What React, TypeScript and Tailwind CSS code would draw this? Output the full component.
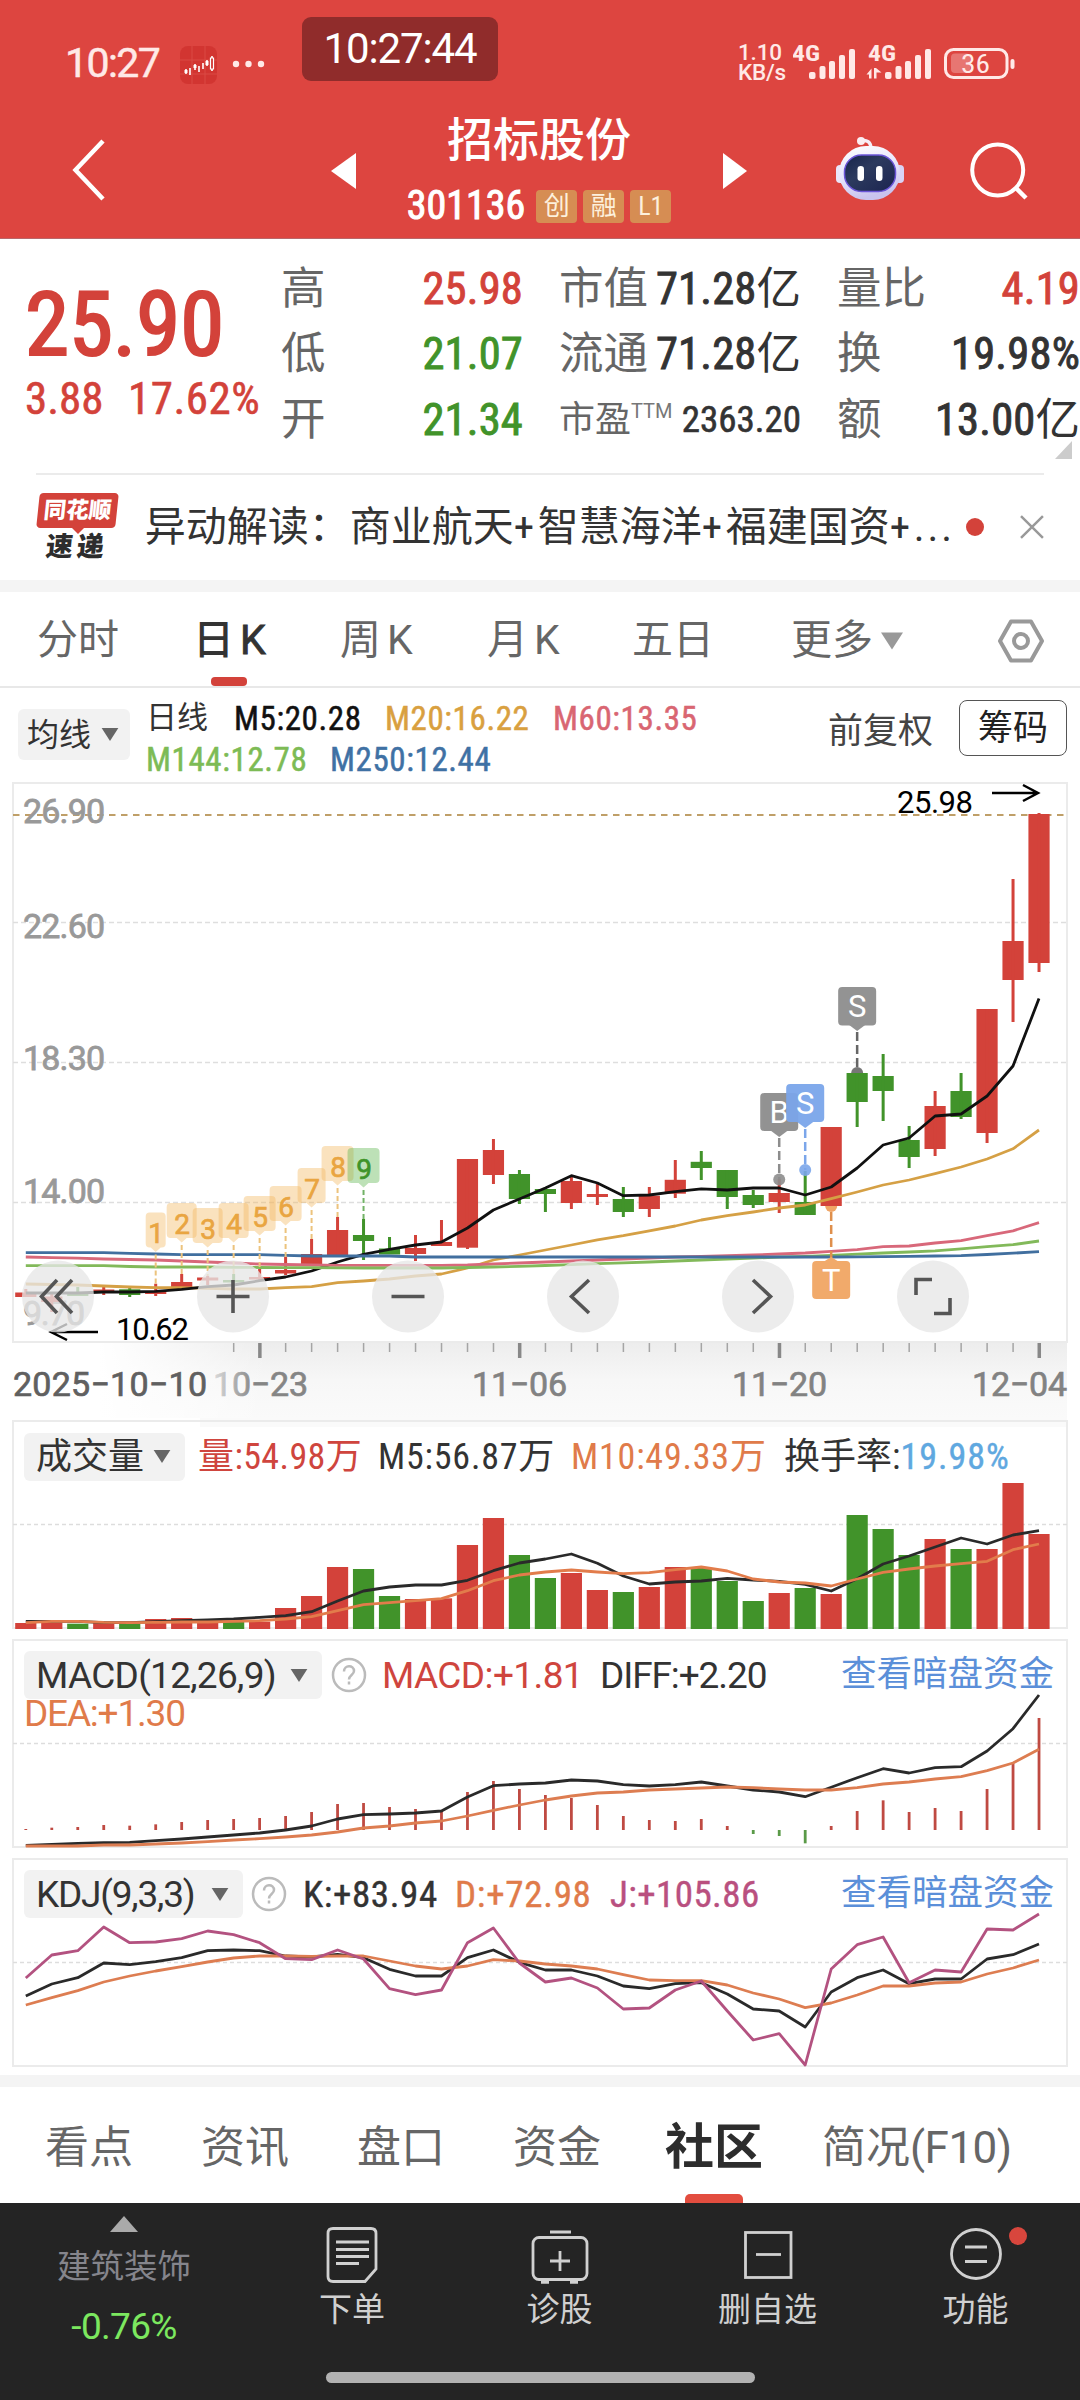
import type { ReactNode } from "react"

type Candle = [up: number, top: number, bottom: number, high: number, low: number]

// x position of the n-th trading day
const dayX = (i: number) => 25.8 + 25.98 * i

// up, body top, body bottom, high, low
const candles: Candle[] = [
  [1, 1292.5, 1297, 1289, 1297],
  [1, 1296.5, 1302, 1293, 1312],
  [0, 1293, 1296, 1287, 1296],
  [1, 1289.5, 1292.5, 1287, 1295],
  [0, 1289.3, 1295, 1288, 1297],
  [1, 1291.5, 1294, 1283.7, 1296],
  [1, 1282, 1287, 1274, 1287],
  [1, 1277.5, 1280.5, 1276, 1285],
  [0, 1280, 1282.5, 1274, 1283],
  [1, 1277, 1279.5, 1269, 1280],
  [1, 1270, 1273.5, 1257, 1275],
  [1, 1254, 1265.5, 1239, 1266],
  [1, 1230, 1255, 1217, 1257],
  [0, 1235, 1241, 1219, 1260],
  [0, 1248.5, 1254.5, 1237, 1254],
  [1, 1248, 1254, 1235, 1261],
  [1, 1242, 1246, 1220, 1246],
  [1, 1159, 1247.7, 1159, 1249],
  [1, 1150, 1175, 1139, 1184],
  [0, 1174, 1199, 1170, 1204],
  [0, 1189, 1194, 1187, 1212],
  [1, 1181, 1203, 1177, 1209],
  [1, 1194, 1197, 1184, 1205],
  [0, 1199, 1212, 1187, 1217],
  [1, 1195.7, 1209, 1187, 1217],
  [1, 1179.8, 1193.7, 1160, 1198],
  [0, 1161.8, 1168, 1151, 1180],
  [0, 1170, 1197, 1170, 1209],
  [0, 1195, 1205, 1190, 1208],
  [1, 1193, 1202, 1179, 1213],
  [0, 1202, 1215, 1171, 1215],
  [1, 1127, 1206, 1127, 1206],
  [0, 1073, 1102, 1073, 1127],
  [0, 1076, 1091, 1054, 1121],
  [0, 1140, 1157, 1126, 1168],
  [1, 1106, 1149, 1091, 1156],
  [0, 1091, 1117, 1073, 1119],
  [1, 1009, 1133, 1009, 1143],
  [1, 941, 980, 879, 1022],
  [1, 814, 963, 813, 972],
]

const m5 = [1293, 1293, 1293, 1292, 1292, 1291.3, 1289.3, 1286.7, 1285, 1280.7, 1277, 1271, 1262, 1254.3, 1249.3, 1245, 1242, 1228, 1210, 1199, 1188, 1175.7, 1183, 1195.7, 1195, 1191.6, 1188.8, 1190, 1188, 1188, 1195, 1187, 1168, 1145, 1138, 1116, 1114, 1096, 1066, 998.6]
const m20 = [1284, 1284.5, 1285, 1286, 1287, 1287.7, 1287.7, 1288.4, 1289, 1289, 1287.7, 1286.7, 1282.7, 1281, 1279, 1276, 1274, 1268, 1260, 1255, 1250, 1245, 1239.8, 1235.7, 1230.8, 1226, 1220, 1215.7, 1212, 1208, 1205, 1198.6, 1192, 1185, 1180, 1173.7, 1167, 1159, 1148.8, 1130]
const m60 = [1257, 1257.6, 1258.2, 1259, 1259.5, 1260, 1261, 1262, 1263, 1264, 1264.5, 1265, 1265.3, 1265.3, 1265.3, 1265.3, 1265.3, 1265, 1264, 1263, 1262, 1261, 1260, 1259, 1258, 1257, 1256.3, 1255.7, 1255, 1254, 1253, 1251.3, 1249.6, 1246.7, 1246, 1243, 1240.6, 1235.7, 1230.8, 1222.7]
const m144 = [1265.7, 1265.7, 1265.7, 1265.7, 1266.5, 1267, 1267, 1267, 1267.3, 1267.5, 1267.6, 1267.7, 1267.8, 1268, 1268, 1268, 1268, 1267.5, 1267, 1266.3, 1265.5, 1264.6, 1263.7, 1262.8, 1262, 1261, 1260, 1259, 1258, 1257.2, 1256.5, 1255.3, 1254.2, 1253, 1252, 1250.8, 1248.8, 1246.7, 1244.7, 1241]
const m250 = [1252.7, 1252.7, 1252.7, 1252.7, 1253.3, 1254, 1254.7, 1254.7, 1254.7, 1254.7, 1255.4, 1256, 1256, 1256, 1256, 1257, 1257, 1257, 1257, 1257, 1257, 1257, 1257, 1257, 1257, 1257, 1257, 1257, 1257, 1257, 1257, 1257, 1256.8, 1256.6, 1256.3, 1256, 1255.7, 1254.5, 1253.2, 1251.6]

// the indicator panels keep their values in thirds of a pixel from the panel origin
const volume = [669, 668, 671, 669, 671, 657, 654, 663, 664, 665, 624, 588, 501, 507, 588, 597, 595, 435, 354, 465, 534, 519, 570, 576, 561, 501, 504, 543, 603, 579, 564, 582, 345, 387, 465, 417, 447, 447, 249, 402]
const volM5 = [664, 664, 664, 668, 668, 665, 662, 660, 657, 652, 647, 635, 603, 573, 561, 555, 555, 541, 512, 489, 477, 462, 490, 528, 552, 546, 543, 535, 540, 544, 553, 573, 536, 492, 468, 441, 414, 432, 405, 392]
const volM10 = [668, 664, 664, 667, 668, 667, 666, 666, 664, 662, 657, 650, 632, 614, 608, 602, 596, 572, 542, 525, 516, 510, 516, 521, 518, 509, 501, 513, 537, 546, 549, 558, 537, 517, 507, 498, 491, 484, 449, 432]

const macd = [597, 593, 591, 585, 587, 583, 576, 570, 567, 564, 558, 546, 522, 519, 531, 537, 545, 486, 453, 477, 495, 504, 525, 558, 570, 573, 567, 588, 612, 618, 640, 588, 543, 511, 546, 534, 543, 477, 400, 264]
const diff = [646, 643, 640, 638, 637, 632, 627, 621, 615, 609, 600, 588, 567, 554, 552, 549, 543, 501, 467, 462, 459, 450, 453, 464, 468, 464, 456, 468, 480, 486, 500, 472, 443, 416, 429, 413, 410, 363, 296, 195]
const dea = [648, 648, 648, 645, 645, 642, 639, 635, 630, 626, 621, 615, 606, 594, 588, 579, 573, 558, 541, 525, 510, 498, 489, 486, 480, 477, 474, 471, 473, 477, 480, 480, 473, 462, 456, 447, 440, 422, 399, 358]

const kLine = [438, 402, 383, 339, 344, 335, 323, 302, 300, 302, 318, 321, 313, 323, 358, 378, 378, 323, 300, 337, 360, 360, 378, 408, 416, 401, 398, 432, 477, 483, 531, 426, 383, 360, 401, 387, 387, 327, 314, 282]
const dLine = [465, 443, 422, 396, 378, 363, 350, 336, 324, 318, 318, 319, 318, 318, 333, 348, 357, 348, 329, 333, 342, 348, 357, 374, 390, 392, 392, 405, 429, 447, 473, 459, 435, 408, 408, 399, 396, 372, 354, 330]
const jLine = [384, 315, 302, 231, 278, 276, 266, 243, 254, 278, 326, 329, 300, 327, 416, 434, 420, 278, 234, 339, 396, 384, 414, 477, 474, 420, 393, 483, 570, 551, 645, 357, 284, 261, 398, 360, 366, 237, 240, 192]

const RED = "#d3423a"
const GREEN = "#41932a"

const third = (origin: number, values: number[]) => values.map((v) => origin + v / 3)

function Line({ values, color, width = 2.8 }: { values: number[]; color: string; width?: number }) {
  const points = values.map((y, i) => `${dayX(i).toFixed(1)},${y.toFixed(1)}`).join(" ")
  return <polyline points={points} fill="none" stroke={color} strokeWidth={width} strokeLinejoin="round" />
}

function Caret({ className = "" }: { className?: string }) {
  return (
    <svg viewBox="0 0 18 14" className={className}>
      <path d="M0 0h18L9 14z" fill="currentColor" />
    </svg>
  )
}

function StatusBar() {
  return (
    <div className="relative flex h-[96px] items-start text-[#ffe9e7]">
      <span className="ml-[65px] mt-[43px] w-[115px] text-[41px] leading-none tracking-[-1.600px] font-stretch-[100%] [-webkit-text-stroke:0.500px]">10:27</span>
      <svg className="mt-[46px] h-[38px] w-[37px]" viewBox="0 0 37 38">
        <rect width="37" height="38" rx="8" fill="#d23531" />
        <path d="M0 14h37M0 28h37M12 0v38M25 0v38" stroke="#da4a45" strokeWidth="1" />
        <path d="M6 23v5M10 22v7M15 18v6M19 20v6M23 17v6M27 14v6M32 10v15" stroke="#fff" strokeWidth="1.6" />
        <path d="M4.500 24h3v3h-3zM13.500 19h3v3h-3zM25.500 15h3v4h-3z" fill="#fff" />
        <path d="M30.500 12h3v11h-3z" fill="#d23531" stroke="#fff" strokeWidth="1.200" />
      </svg>
      <svg className="ml-[15px] mt-[60px] h-[8px] w-[34px]" viewBox="0 0 34 8">
        <circle cx="4" cy="4" r="3.200" fill="currentColor" />
        <circle cx="16.500" cy="4" r="3.200" fill="currentColor" />
        <circle cx="29" cy="4" r="3.200" fill="currentColor" />
      </svg>
      <div className="absolute left-[302px] top-[17px] flex h-[64px] w-[196px] items-center justify-center rounded-[9px] bg-[#902c2b] text-[42px] leading-none tracking-[-1.100px] text-white font-stretch-[100%]">
        10:27:44
      </div>
      <div className="ml-[472px] mt-[42px] w-[55px] text-[22.500px] font-medium leading-[20px] tracking-[-0.200px] font-stretch-[100%]">
        1.10 KB/s
      </div>
      <svg className="mt-[42px] h-[40px] w-[232px]" viewBox="793 42 232 40" fill="currentColor">
        <text x="792" y="61" fontSize="22" fontWeight="700" textLength="28" lengthAdjust="spacingAndGlyphs">4G</text>
        <text x="868" y="61" fontSize="22" fontWeight="700" textLength="28" lengthAdjust="spacingAndGlyphs">4G</text>
        {[809, 885].map((x) => (
          <g key={x}>
            <rect x={x} y="72" width="6.500" height="7" rx="2" />
            <rect x={x + 10.500} y="66" width="6" height="13" rx="2" />
            <rect x={x + 20} y="61" width="6" height="18" rx="2" />
            <rect x={x + 30} y="55" width="6" height="24" rx="2" />
            <rect x={x + 40} y="49" width="6" height="30" rx="2" />
          </g>
        ))}
        <path d="M866.500 74.500l5-6v10h-2.500v-4zM881.500 72.500l-5 0v6h-2.500v-10.500h2z" />
        <rect x="945.500" y="49.500" width="61.500" height="28" rx="8" fill="none" stroke="currentColor" strokeWidth="3" />
        <rect x="951" y="53.500" width="19" height="19.500" rx="4" opacity="0.300" />
        <rect x="1010.500" y="59" width="4" height="10" rx="2" />
        <text x="961" y="73" fontSize="26" textLength="29" lengthAdjust="spacingAndGlyphs">36</text>
      </svg>
    </div>
  )
}

function Robot() {
  return (
    <svg className="h-[66px] w-[70px]" viewBox="835 135 70 66">
      <defs>
        <linearGradient id="shell" x1="0" y1="0" x2="0.300" y2="1">
          <stop offset="0" stopColor="#fff" />
          <stop offset="0.600" stopColor="#e4e2fb" />
          <stop offset="1" stopColor="#c9c3ee" />
        </linearGradient>
        <linearGradient id="visor" x1="0" y1="0" x2="1" y2="1">
          <stop offset="0" stopColor="#16244a" />
          <stop offset="0.400" stopColor="#2c3a5e" />
          <stop offset="1" stopColor="#1b2450" />
        </linearGradient>
      </defs>
      <path d="M860 141c7-2 11 1 11 8" fill="none" stroke="#f6eef8" strokeWidth="3.500" />
      <circle cx="861" cy="141" r="4" fill="#fbeef2" />
      <rect x="836" y="165" width="9" height="18" rx="4" fill="#e9e6fa" />
      <rect x="895" y="165" width="9" height="18" rx="4" fill="#d9d3f5" />
      <rect x="839" y="146" width="61" height="54" rx="27" fill="url(#shell)" />
      <rect x="844.500" y="155" width="51" height="36.500" rx="17" fill="url(#visor)" stroke="#6b55d8" strokeWidth="1.500" />
      <rect x="857.500" y="166" width="6.500" height="15" rx="3.200" fill="#fff" />
      <rect x="876" y="166" width="6.500" height="15" rx="3.200" fill="#fff" />
    </svg>
  )
}

function Tag({ children }: { children: ReactNode }) {
  return (
    <span className="flex h-[33px] w-[41px] items-center justify-center rounded-[4px] bg-[#d68d53] text-[26px] leading-none text-[#fdf0dc]">
      {children}
    </span>
  )
}

function TitleBar() {
  return (
    <div className="flex h-[143px] border-b border-[#b9676a] text-white">
      <svg className="ml-[70px] mt-[42px] h-[64px] w-[40px]" viewBox="70 138 40 64">
        <path d="M103 141L75.500 170L103 199" fill="none" stroke="#fff" strokeWidth="4.500" />
      </svg>
      <svg className="ml-[221px] mt-[57px] h-[36px] w-[25px]" viewBox="0 0 25 36">
        <path d="M25 0v36L0 18z" fill="#fff" />
      </svg>
      <div className="ml-[33px] flex w-[300px] flex-col items-center pt-[21px]">
        <h1 className="text-[46px] font-medium leading-[46px]">招标股份</h1>
        <div className="mt-[25px] flex items-center gap-[6px]">
          <span className="mr-[5px] text-[40px] leading-[36px] [-webkit-text-stroke:1px]">301136</span>
          <Tag>创</Tag>
          <Tag>融</Tag>
          <Tag>L1</Tag>
        </div>
      </div>
      <svg className="ml-[34px] mt-[57px] h-[36px] w-[24px]" viewBox="0 0 24 36">
        <path d="M0 0v36l24-18z" fill="#fff" />
      </svg>
      <div className="ml-[88px] mt-[39px]">
        <Robot />
      </div>
      <svg className="ml-[63px] mt-[44px] h-[62px] w-[64px]" viewBox="968 140 64 62">
        <circle cx="997.700" cy="170" r="25.500" fill="none" stroke="#fff" strokeWidth="4" />
        <path d="M1016 188l10 10" stroke="#fff" strokeWidth="4.500" />
      </svg>
    </div>
  )
}

function QuoteRow({ label, value, unit, color = "text-[#333]" }: { label: string; value: string; unit?: string; color?: string }) {
  return (
    <div className="flex h-[65.500px] items-center whitespace-nowrap text-[44.500px] leading-none">
      <span className="text-[#666]">{label}</span>
      <span className={`ml-auto tracking-[0.200px] [-webkit-text-stroke:0.900px] ${color}`}>{value}</span>
      {unit && <span className="text-[#333]">{unit}</span>}
    </div>
  )
}

function Quote() {
  return (
    <section className="relative flex h-[234px] pt-[17px]">
      <div className="w-[281px] pl-[25px] text-[#d3423a]">
        <div className="mt-[25px] text-[89px] leading-[88px] [-webkit-text-stroke:2.200px]">25.90</div>
        <div className="mt-[7px] flex text-[45px] leading-[45px] [-webkit-text-stroke:0.600px]">
          <span className="w-[103px]">3.88</span>
          <span className="tracking-[0.500px]">17.62%</span>
        </div>
      </div>
      <div className="w-[242px]">
        <QuoteRow label="高" value="25.98" color="text-[#d3423a]" />
        <QuoteRow label="低" value="21.07" color="text-[#41932a]" />
        <QuoteRow label="开" value="21.34" color="text-[#41932a]" />
      </div>
      <div className="ml-[36px] w-[242px]">
        <QuoteRow label="市值" value="71.28" unit="亿" />
        <QuoteRow label="流通" value="71.28" unit="亿" />
        <div className="flex h-[65.500px] items-center whitespace-nowrap text-[36px] leading-none">
          <span className="text-[#666]">市盈</span>
          <span className="-mt-[18px] text-[20px] text-[#777] font-stretch-[100%]">TTM</span>
          <span className="ml-auto text-[37px] text-[#333] [-webkit-text-stroke:0.600px]">2363.20</span>
        </div>
      </div>
      <div className="ml-[36px] w-[243px]">
        <QuoteRow label="量比" value="4.19" color="text-[#d3423a]" />
        <QuoteRow label="换" value="19.98%" />
        <QuoteRow label="额" value="13.00" unit="亿" />
      </div>
      <svg className="absolute right-[8px] top-[202px] h-[18px] w-[17px]" viewBox="0 0 17 18">
        <path d="M17 0v18H0z" fill="#ccc" />
      </svg>
    </section>
  )
}

function News() {
  return (
    <section className="mx-[36px] flex h-[107px] items-center border-t-2 border-[#ebebeb] pb-[2px]">
      <div className="flex w-[84px] flex-col items-center">
        <div className="flex h-[35px] w-[79px] -skew-x-6 items-center justify-center rounded-[4px] bg-[#d3423a] text-[22.500px] font-black leading-none text-white">
          同花顺
        </div>
        <svg className="h-[6px] w-[12px]" viewBox="0 0 12 6">
          <path d="M0 0h12L6 6z" fill="#d3423a" />
        </svg>
        <div className="-ml-[1px] -skew-x-6 text-[27px] font-black leading-[27px] tracking-[4px] text-[#2d2d2d]">速递</div>
      </div>
      <p className="ml-[25px] w-[812px] whitespace-nowrap text-[41px] leading-[56px] text-[#333]">
        异动解读：商业航天<span className="inline-block w-[24px]">+</span>智慧海洋
        <span className="inline-block w-[24px]">+</span>福建国资<span className="inline-block w-[24px]">+</span>
        <span className="tracking-[3px]">...</span>
      </p>
      <span className="ml-[11px] h-[18px] w-[18px] rounded-full bg-[#d3423a]" />
      <svg className="ml-[36px] h-[24px] w-[24px]" viewBox="0 0 24 24">
        <path d="M1 1l22 22M23 1L1 23" stroke="#999" strokeWidth="2.500" />
      </svg>
    </section>
  )
}

function PeriodTabs() {
  return (
    <nav className="relative flex h-[96px] items-center border-b-2 border-[#e8e8e8] pt-[3px] text-[41px] leading-none text-[#666]">
      <span className="ml-[37px] w-[156px]">分时</span>
      <span className="w-[147px] font-medium text-[#333]">
        日<span className="ml-[6px] font-normal font-stretch-[100%] [-webkit-text-stroke:0.900px]">K</span>
      </span>
      <span className="w-[147px]">
        周<span className="ml-[6px] font-stretch-[100%]">K</span>
      </span>
      <span className="w-[145px]">
        月<span className="ml-[6px] font-stretch-[100%]">K</span>
      </span>
      <span className="w-[159px]">五日</span>
      <span className="w-[90px]">更多</span>
      <Caret className="h-[18px] w-[22px] text-[#999]" />
      <svg className="ml-[94px] h-[46px] w-[48px]" viewBox="0 0 48 46">
        <path d="M14 3.500h20L45 23L34 42.500H14L3 23z" fill="none" stroke="#999" strokeWidth="4" strokeLinejoin="round" />
        <circle cx="24" cy="23" r="7" fill="none" stroke="#999" strokeWidth="4" />
      </svg>
      <span className="absolute bottom-0 left-[211px] h-[9px] w-[36px] rounded-[4px] bg-[#d3423a]" />
    </nav>
  )
}

function AverageLegend() {
  return (
    <div className="flex h-[88px] whitespace-nowrap leading-none">
      <button className="ml-[18px] mt-[21px] flex h-[51px] w-[112px] items-center rounded-[6px] bg-[#f2f2f2] pl-[9px] text-[32px] text-[#333]">
        均线
        <Caret className="ml-[10px] h-[13px] w-[18px] text-[#666]" />
      </button>
      <div className="ml-[16px] w-[682px] pt-[14px] text-[33px] tracking-[0.600px] [-webkit-text-stroke:0.500px]">
        <div className="flex h-[32px]">
          <span className="w-[88px] text-[31px] tracking-normal text-[#333] [-webkit-text-stroke:0]">日线</span>
          <span className="w-[151px] text-[#111]">M5:20.28</span>
          <span className="w-[168px] text-[#d9a03f]">M20:16.22</span>
          <span className="text-[#d96672]">M60:13.35</span>
        </div>
        <div className="mt-[9px] flex">
          <span className="w-[184px] text-[#7dbb55]">M144:12.78</span>
          <span className="text-[#3f71a4]">M250:12.44</span>
        </div>
      </div>
      <span className="mt-[26px] w-[131px] text-[35px] text-[#444]">前复权</span>
      <button className="mt-[12px] flex h-[56px] w-[108px] items-center justify-center rounded-[8px] border-[1.500px] border-[#555] text-[35px] text-[#222]">
        筹码
      </button>
    </div>
  )
}

const priceLabels: [string, number, number][] = [
  ["26.90", 823, 82],
  ["22.60", 938, 82],
  ["18.30", 1070, 82],
  ["14.00", 1203, 82],
  ["9.70", 1325, 62],
]

// day, top of the box, half width
const nineTurn: [number, number, number][] = [
  [5, 1212.5, 10],
  [6, 1203, 15],
  [7, 1208, 15],
  [8, 1203, 15],
  [9, 1196, 16],
  [10, 1186, 16],
  [11, 1168, 14],
  [12, 1146, 16],
  [13, 1148, 16],
]

function NineFlag({ day, top, half }: { day: number; top: number; half: number }) {
  const x = dayX(day)
  const last = day === 13
  const color = last ? "#3f9428" : "#e9a541"
  return (
    <g>
      <line x1={x} x2={x} y1={top + 42} y2={candles[day][3]} stroke={last ? "#72b266" : "#ecc37d"} strokeWidth="2" strokeDasharray="5 3" />
      <g fill={last ? "#5ab54c" : "#f3b75c"} opacity="0.400">
        <path
          d={`M${x - half + 4} ${top}H${x + half - 4}q4 0 4 4V${top + 31}q0 4 -4 4H${x + 5}L${x} ${top + 39.5}L${x - 5} ${top + 35}H${x - half + 4}q-4 0 -4 -4V${top + 4}q0 -4 4 -4z`}
        />
      </g>
      <text x={x + 0.5} y={top + 30.5} fontSize="28" textAnchor="middle" className="font-stretch-[100%]" fill={color} stroke={color} strokeWidth="0.700">
        {day - 4}
      </text>
    </g>
  )
}

function TradeFlag({ day, top, label, color, dotY }: { day: number; top: number; label: string; color: string; dotY: number }) {
  const x = dayX(day)
  return (
    <g>
      <line x1={x} x2={x} y1={top + 45} y2={dotY} stroke={color} strokeWidth="2.500" strokeDasharray="9 4" />
      <circle cx={x} cy={dotY} r="6" fill={color} opacity="0.900" />
      <g opacity="0.950" fill={color}>
        <rect x={x - 19} y={top} width="38" height="38" rx="4" />
        <path d={`M${x - 8} ${top + 38}h16l-8 6z`} />
      </g>
      <text x={x} y={top + 30} fontSize="31" textAnchor="middle" className="font-stretch-[100%]" fill="#fff">
        {label}
      </text>
    </g>
  )
}

function PriceChart() {
  return (
    <svg viewBox="0 776 1080 642" className="block h-[642px] w-[1080px]">
      <defs>
        <linearGradient id="axisShade" x1="0" y1="0" x2="0" y2="1">
          <stop offset="0" stopColor="#ededed" />
          <stop offset="0.500" stopColor="#f7f7f7" />
          <stop offset="1" stopColor="#fafafa" />
        </linearGradient>
        <linearGradient id="axisFade" x1="0" x2="1">
          <stop offset="0" stopColor="#fff" />
          <stop offset="1" stopColor="#fff" stopOpacity="0" />
        </linearGradient>
        <linearGradient id="dateFade" gradientUnits="userSpaceOnUse" x1="212" x2="255" y1="0" y2="0">
          <stop offset="0" stopColor="#ddd" />
          <stop offset="1" stopColor="#858585" />
        </linearGradient>
      </defs>

      {/* grid */}
      <rect x="13" y="783" width="1054" height="559" fill="#fff" stroke="#ebebeb" strokeWidth="2" />
      <line x1="13" x2="1067" y1="815" y2="815" stroke="#bf9f68" strokeWidth="2" strokeDasharray="6.500 5.500" />
      <g stroke="#dedede" strokeWidth="1.500" strokeDasharray="5 3">
        <line x1="13" x2="1067" y1="922.500" y2="922.500" />
        <line x1="13" x2="1067" y1="1062.500" y2="1062.500" />
        <line x1="13" x2="1067" y1="1202.500" y2="1202.500" />
      </g>
      {priceLabels.map(([label, y, w]) => (
        <text key={label} x="23" y={y} fontSize="34" fill="#999" stroke="#999" strokeWidth="0.800" textLength={w} className="font-stretch-[100%]">
          {label}
        </text>
      ))}

      {/* candles */}
      {candles.map(([up, top, bottom, high, low], i) => (
        <g key={i} fill={up ? RED : GREEN}>
          <rect x={dayX(i) - 10.6} y={top} width="21.200" height={bottom - top} />
          <rect x={dayX(i) - 1.5} y={high} width="3" height={low - high} />
        </g>
      ))}
      <Line values={m20} color="#d5a045" />
      <Line values={m5} color="#111" />
      <Line values={m60} color="#d8687a" />
      <Line values={m144} color="#82b95a" />
      <Line values={m250} color="#416f9f" />

      {/* flags */}
      {nineTurn.map(([day, top, half]) => (
        <NineFlag key={day} day={day} top={top} half={half} />
      ))}
      <TradeFlag day={29} top={1093} label="B" color="#8d8d8d" dotY={1179.5} />
      <TradeFlag day={30} top={1084} label="S" color="#7ba6ea" dotY={1170} />
      <path d={`M${dayX(32) - 6} 1073a6 6 0 0 1 12 0z`} fill="#777" />
      <line x1={dayX(32)} x2={dayX(32)} y1="1032" y2="1068" stroke="#666" strokeWidth="2.500" strokeDasharray="9 4" />
      <rect x={dayX(32) - 19} y="987" width="38" height="38.500" rx="4" fill="#939393" />
      <path d={`M${dayX(32) - 8} 1025h16l-8 6z`} fill="#939393" />
      <text x={dayX(32)} y="1017" fontSize="31" textAnchor="middle" className="font-stretch-[100%]" fill="#fff">S</text>
      <path d={`M${dayX(31) - 6} 1206a6 6 0 0 0 12 0z`} fill="#f0a566" />
      <line x1={dayX(31)} x2={dayX(31)} y1="1212" y2="1258" stroke="#df8f4c" strokeWidth="2.500" strokeDasharray="9 4" />
      <path d={`M${dayX(31) - 8} 1262h16l-8 -5z`} fill="#f1aa6b" />
      <rect x={dayX(31) - 19} y="1261" width="38" height="38" rx="4" fill="#f1aa6b" />
      <text x={dayX(31)} y="1291" fontSize="31" textAnchor="middle" className="font-stretch-[100%]" fill="#fff">T</text>

      {/* highest and lowest price */}
      <g fill="none" stroke="#000" strokeWidth="2.500">
        <path d="M992 793h46M1023 785l15 8l-15 8" />
        <path d="M98 1332H51M67 1324l-16 8l16 8" />
      </g>
      <text x="897" y="813" fontSize="31" textLength="76" className="font-stretch-[100%]" fill="#000">25.98</text>
      <text x="116" y="1340" fontSize="31" textLength="73" className="font-stretch-[100%]" fill="#000">10.62</text>

      {/* floating tools */}
      {[58, 233, 408, 583, 758, 933].map((cx) => (
        <circle key={cx} cx={cx} cy="1296.500" r="36" fill="#e7e7e7" opacity="0.780" />
      ))}
      <g fill="none" stroke="#555" strokeWidth="3.600">
        <path d="M57 1280l-15.500 16.500l15.500 16.500M72 1280l-15.500 16.500l15.500 16.500" />
        <path d="M216.500 1296.500h33M233 1280v33" />
        <path d="M391.500 1296.500h33" />
        <path d="M589 1280l-17.500 16.500l17.500 16.500" />
        <path d="M753 1280l17.500 16.500l-17.500 16.500" />
        <path d="M916 1295v-15.500h16M950 1298v15.500h-16" />
      </g>

      {/* date axis */}
      <rect x="13" y="1343" width="1054" height="75" fill="url(#axisShade)" />
      <rect x="0" y="1343" width="100" height="75" fill="#fff" />
      <rect x="99" y="1343" width="170" height="75" fill="url(#axisFade)" />
      {candles.map((_, i) =>
        i < 8 ? null : i % 10 === 9 ? (
          <rect key={i} x={dayX(i) - 1.5} y="1343" width="3.500" height="15" fill="#888" />
        ) : (
          <rect key={i} x={dayX(i) - 0.7} y="1343" width="1.500" height="9" fill="#a5a5a5" />
        )
      )}
      <g fontSize="34" className="font-stretch-[100%]" fill="#828282" stroke="#828282" strokeWidth="0.700">
        <text x="13" y="1396" textLength="194" fill="#606060" stroke="#606060">2025−10−10</text>
        <text x="213" y="1396" textLength="95" fill="url(#dateFade)" stroke="url(#dateFade)">10−23</text>
        <text x="472" y="1396" textLength="95">11−06</text>
        <text x="732" y="1396" textLength="95">11−20</text>
        <text x="972" y="1396" textLength="95">12−04</text>
      </g>
    </svg>
  )
}

function Selector({ className, children }: { className: string; children: ReactNode }) {
  return (
    <button className={`flex h-[48px] shrink-0 items-center rounded-[6px] bg-[#f2f2f2] pl-[12px] text-[#333] ${className}`}>
      {children}
      <Caret className="ml-auto mr-[14px] h-[13px] w-[18px] text-[#666]" />
    </button>
  )
}

function Help({ className }: { className: string }) {
  return (
    <svg className={`h-[36px] w-[36px] shrink-0 ${className}`} viewBox="0 0 36 36">
      <circle cx="18" cy="18" r="16" fill="none" stroke="#bbb" strokeWidth="2.500" />
      <path d="M13 14.500c0-7 10-7 10-.5c0 4-5 4-5 8.500M18 24.500v3" fill="none" stroke="#bbb" strokeWidth="2.500" />
    </svg>
  )
}

function VolumePanel() {
  return (
    <section className="grid h-[216px] *:col-start-1 *:row-start-1">
      <svg viewBox="0 1418 1080 216" className="h-[216px] w-[1080px]">
        <rect x="200" y="1418" width="867" height="9" fill="#fafafa" />
        <rect x="13" y="1421" width="1054" height="207" fill="none" stroke="#ebebeb" strokeWidth="2" />
        <line x1="13" x2="1067" y1="1524.500" y2="1524.500" stroke="#ddd" strokeWidth="1.500" strokeDasharray="4 3" />
        {volume.map((v, i) => (
          <rect key={i} x={dayX(i) - 10.6} y={1400 + v / 3} width="21.200" height={(687 - v) / 3} fill={candles[i][0] ? RED : GREEN} />
        ))}
        <Line values={third(1400, volM5)} color="#2a2a2a" />
        <Line values={third(1400, volM10)} color="#e27c4b" />
      </svg>
      <div className="ml-[24px] mt-[14px] flex h-[48px] items-center whitespace-nowrap pt-[1px] text-[36px] leading-none">
        <Selector className="w-[161px]">成交量</Selector>
        <span className="ml-[13px] w-[180px] tracking-[0.400px] text-[#cf453e]">量:54.98万</span>
        <span className="w-[193px] tracking-[0.800px] text-[#333]">M5:56.87万</span>
        <span className="w-[213px] tracking-[0.800px] text-[#e07b4a]">M10:49.33万</span>
        <span className="text-[#333]">换手率:</span>
        <span className="tracking-[1px] text-[#5fa8e0] [-webkit-text-stroke:0.400px]">19.98%</span>
      </div>
    </section>
  )
}

function MacdPanel() {
  return (
    <section className="grid h-[220px] *:col-start-1 *:row-start-1">
      <svg viewBox="0 1634 1080 220" className="h-[220px] w-[1080px]">
        <rect x="13" y="1640" width="1054" height="207" fill="none" stroke="#ebebeb" strokeWidth="2" />
        <line x1="13" x2="1067" y1="1743.500" y2="1743.500" stroke="#ddd" strokeWidth="1.500" strokeDasharray="4 3" />
        {macd.map((v, i) => (
          <line key={i} x1={dayX(i)} x2={dayX(i)} y1={1830} y2={1630 + v / 3} stroke={v > 600 ? "#5a9a48" : "#bf4a42"} strokeWidth="2.800" />
        ))}
        <Line values={third(1630, diff)} color="#2a2a2a" />
        <Line values={third(1630, dea)} color="#dd7d51" />
      </svg>
      <div className="ml-[24px] mt-[17px] whitespace-nowrap text-[37px] leading-none font-stretch-[100%]">
        <div className="flex h-[48px] items-center">
          <Selector className="w-[298px] tracking-[-0.700px]">MACD(12,26,9)</Selector>
          <Help className="ml-[9px]" />
          <span className="ml-[15px] w-[218px] tracking-[-0.600px] text-[#cf453e]">MACD:+1.81</span>
          <span className="w-[241px] tracking-[-1.100px] text-[#333]">DIFF:+2.20</span>
          <a className="text-[35.500px] text-[#5b8fd9]">查看暗盘资金</a>
        </div>
        <div className="-mt-[4px] tracking-[-1.200px] text-[#e07b4a]">DEA:+1.30</div>
      </div>
    </section>
  )
}

function KdjPanel() {
  return (
    <section className="grid h-[221px] *:col-start-1 *:row-start-1">
      <svg viewBox="0 1854 1080 221" className="h-[221px] w-[1080px]">
        <rect x="13" y="1859" width="1054" height="207" fill="none" stroke="#ebebeb" strokeWidth="2" />
        <line x1="13" x2="1067" y1="1962.500" y2="1962.500" stroke="#ddd" strokeWidth="1.500" strokeDasharray="4 3" />
        <Line values={third(1850, kLine)} color="#2a2a2a" />
        <Line values={third(1850, dLine)} color="#dd7d51" />
        <Line values={third(1850, jLine)} color="#b35280" />
      </svg>
      <div className="ml-[24px] mt-[16px] flex h-[48px] items-center whitespace-nowrap text-[37px] leading-none">
        <Selector className="w-[219px] tracking-[-1.200px] font-stretch-[100%]">KDJ(9,3,3)</Selector>
        <Help className="ml-[8px]" />
        <span className="ml-[16px] w-[152px] tracking-[0.600px] text-[#333] [-webkit-text-stroke:0.400px]">K:+83.94</span>
        <span className="w-[155px] tracking-[0.700px] text-[#e07b4a] [-webkit-text-stroke:0.400px]">D:+72.98</span>
        <span className="w-[231px] tracking-[0.400px] text-[#b9507f] [-webkit-text-stroke:0.400px]">J:+105.86</span>
        <a className="text-[35.500px] text-[#5b8fd9]">查看暗盘资金</a>
      </div>
    </section>
  )
}

function SectionTabs() {
  return (
    <nav className="relative flex h-[116px] items-center whitespace-nowrap pt-[5px] text-[44px] leading-none text-[#666]">
      <span className="ml-[45px] w-[156px]">看点</span>
      <span className="w-[156px]">资讯</span>
      <span className="w-[156px]">盘口</span>
      <span className="w-[152px]">资金</span>
      <span className="w-[157px] text-[49px] font-bold text-[#2d2d2d]">社区</span>
      <span>
        简况<span className="tracking-[-0.500px] font-stretch-[100%]">(F10)</span>
      </span>
      <span className="absolute bottom-0 left-[685px] h-[9px] w-[58px] rounded-t-[5px] bg-[#e34d3f]" />
    </nav>
  )
}

function BarItem({ label, className, children }: { label: string; className: string; children: ReactNode }) {
  return (
    <div className={`flex flex-col items-center ${className}`}>
      <svg viewBox="0 0 66 60" className="mt-[21px] h-[60px] w-[66px]" fill="none" stroke="#d0d0d0" strokeWidth="2.800">
        {children}
      </svg>
      <span className="mt-[9px] text-[33px] leading-none text-[#d0d0d0]">{label}</span>
    </div>
  )
}

function BottomBar() {
  return (
    <footer className="h-[197px] bg-[#242424]">
      <div className="flex h-[169px] whitespace-nowrap">
        <div className="flex w-[248px] flex-col items-center pt-[13px]">
          <svg viewBox="0 0 28 16" className="h-[16px] w-[28px]">
            <path d="M14 0l14 16H0z" fill="#aaa" />
          </svg>
          <span className="mt-[18px] text-[33.500px] leading-none text-[#85858c]">建筑装饰</span>
          <span className="mt-[24px] text-[37px] leading-none tracking-[-0.700px] text-[#7ce85f] font-stretch-[100%]">-0.76%</span>
        </div>
        <BarItem label="下单" className="w-[208px]">
          <path d="M14 4.500h38q5 0 5 5V45l-11 12.500H14q-5 0-5-5v-43q0-5 5-5z" />
          <path d="M17 18h33M17 25.500h33M17 32.500h33M17 39.500h23" />
        </BarItem>
        <BarItem label="诊股" className="w-[207px]">
          <path d="M23 8h21M33 27v20M23 37h20" />
          <rect x="6" y="13.500" width="54" height="42" rx="6" />
          <path d="M14 58h8M43 58h8" strokeWidth="3.500" />
        </BarItem>
        <BarItem label="删自选" className="w-[209px]">
          <rect x="10.500" y="8.500" width="45.500" height="45" />
          <path d="M21 30.500h25" />
        </BarItem>
        <div className="relative">
          <BarItem label="功能" className="w-[207px]">
            <circle cx="33" cy="30" r="24.500" />
            <path d="M22 23h22M22 37.500h22" />
          </BarItem>
          <span className="absolute left-[137px] top-[24px] h-[18px] w-[18px] rounded-full bg-[#d8463d]" />
        </div>
      </div>
      <div className="mx-auto h-[11px] w-[429px] rounded-full bg-[#b2b2b2]" />
    </footer>
  )
}

export default function App() {
  return (
    <div className="h-[2400px] w-[1080px] overflow-hidden bg-white font-['Roboto','Noto_Sans_CJK_SC',sans-serif] font-stretch-[75%]">
      <header className="h-[239px] bg-[#dd4540]">
        <StatusBar />
        <TitleBar />
      </header>
      <Quote />
      <News />
      <div className="h-[12px] bg-[#f4f4f4]" />
      <PeriodTabs />
      <AverageLegend />
      <PriceChart />
      <VolumePanel />
      <MacdPanel />
      <KdjPanel />
      <div className="h-[12px] bg-[#f4f4f4]" />
      <SectionTabs />
      <BottomBar />
    </div>
  )
}
